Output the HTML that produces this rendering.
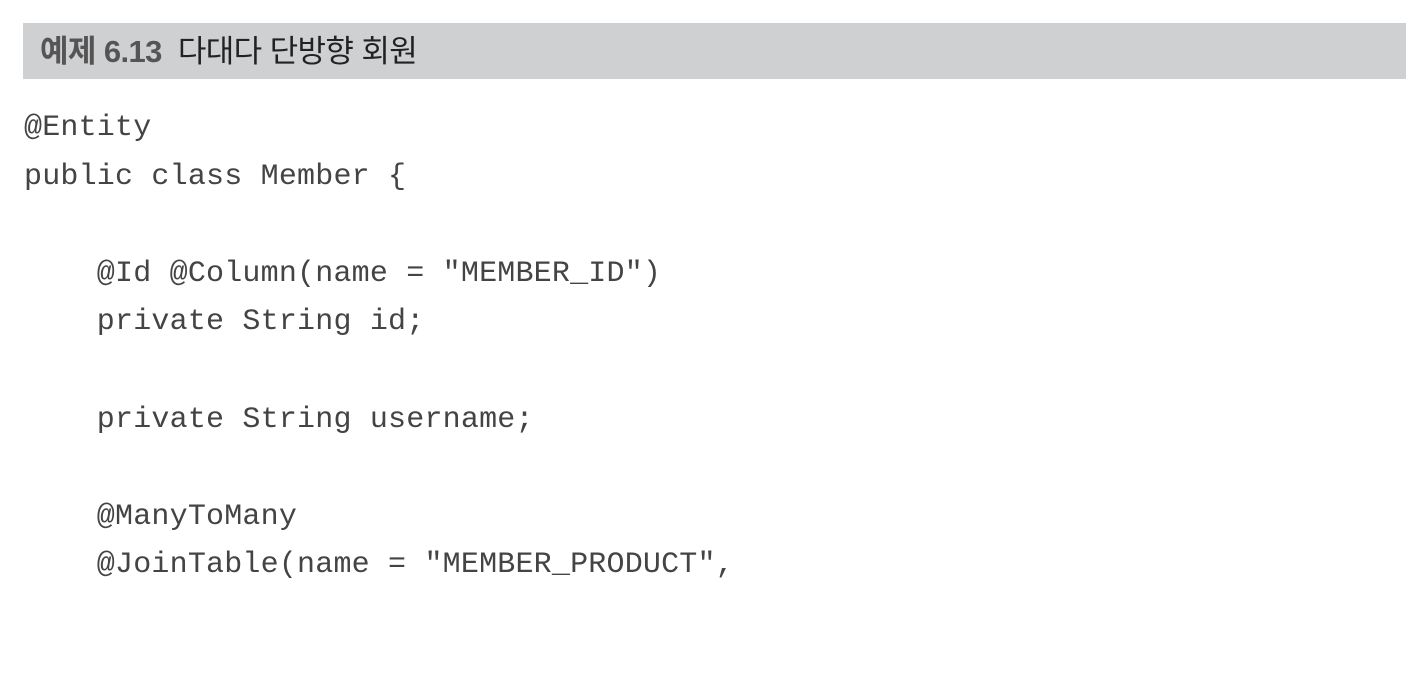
<!DOCTYPE html>
<html><head><meta charset="utf-8"><style>
html,body{margin:0;padding:0;background:#fff;width:1418px;height:678px;overflow:hidden}
.bar{position:absolute;left:23px;top:23px;width:1383px;height:56px;background:#cfd0d2}
.title{position:absolute;left:40px;top:31px;font-family:"Liberation Sans","Noto Sans CJK KR",sans-serif;font-size:31px;line-height:42px;color:#222;white-space:pre;letter-spacing:-0.6px}
.title b{color:#555;font-weight:bold}
pre{position:absolute;left:24px;top:104px;margin:0;font-family:"Liberation Mono",monospace;font-size:30px;letter-spacing:0.2px;line-height:48.6px;color:#444;font-weight:normal}
</style></head><body>
<div class="bar"></div>
<div class="title"><b>예제 6.13</b>  다대다 단방향 회원</div>
<pre>@Entity
public class Member {

    @Id @Column(name = "MEMBER_ID")
    private String id;

    private String username;

    @ManyToMany
    @JoinTable(name = "MEMBER_PRODUCT",</pre>
</body></html>
